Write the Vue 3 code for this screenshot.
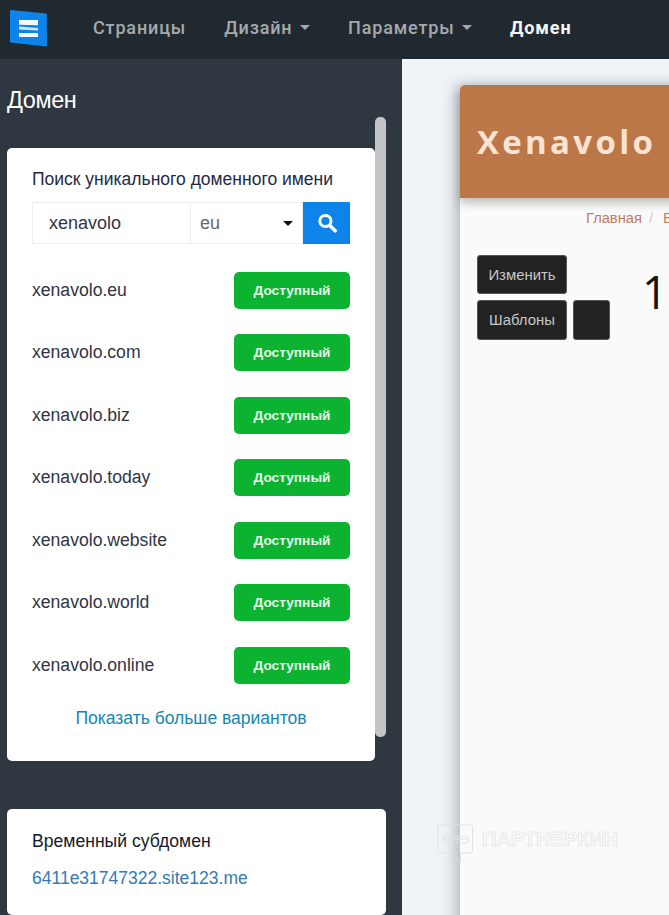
<script setup>
const domains = ['eu', 'com', 'biz', 'today', 'website', 'world', 'online']
</script>

<template>
  <div class="page">
    <header class="topbar">
      <svg class="logo" width="38" height="38" viewBox="0 0 38 38">
        <path d="M0.8 0 36 3.4Q36.8 3.5 36.8 4.3L37 35.6Q37 36.5 36 36.4L0.8 32.6Q0 32.5 0 31.7V0.8Q0 0 0.8 0Z" fill="#0d84ea" />
        <path d="M9 10H28V15.2L9 14.8Z" fill="#f3f9fe" />
        <path d="M9 16.6 28 18V20.4L9 19.6Z" fill="#cfe6fa" />
        <path d="M9 23H28V27H9Z" fill="#f3f9fe" />
      </svg>
      <nav class="nav">
        <a class="nav-link">Страницы</a>
        <a class="nav-link caret">Дизайн</a>
        <a class="nav-link caret">Параметры</a>
        <a class="nav-link active">Домен</a>
      </nav>
    </header>

    <div class="layout">
      <aside class="sidebar">
        <h2 class="side-title">Домен</h2>

        <section class="card search-card">
          <p class="search-label">Поиск уникального доменного имени</p>
          <div class="search">
            <div class="search-input">xenavolo</div>
            <div class="search-select">eu</div>
            <button class="search-btn">
              <svg width="22" height="22" viewBox="0 0 22 22">
                <circle cx="9.4" cy="9" r="5.6" fill="none" stroke="#fff" stroke-width="3" />
                <path d="M13.8 13.4 19.2 18.8" stroke="#fff" stroke-width="3.6" stroke-linecap="round" />
              </svg>
            </button>
          </div>
          <ul class="domains">
            <li v-for="d in domains" :key="d" class="domain">
              <span>xenavolo.{{ d }}</span>
              <button class="avail">Доступный</button>
            </li>
          </ul>
          <a class="more">Показать больше вариантов</a>
        </section>

        <section class="card sub-card">
          <p class="sub-title">Временный субдомен</p>
          <a class="sub-link">6411e31747322.site123.me</a>
        </section>

        <div class="scrollbar"></div>
      </aside>

      <main class="main">
        <div class="site">
          <div class="site-head">Xenavolo</div>
          <div class="crumbs">
            <span>Главная</span><i>/</i><span>Все</span>
          </div>
          <div class="site-body">
            <div class="tools">
              <button class="tool">Изменить</button>
              <div class="tool-row">
                <button class="tool">Шаблоны</button>
                <button class="tool square"></button>
              </div>
            </div>
            <div class="big">1</div>
          </div>
        </div>
      </main>
    </div>

    <div class="watermark">
      <svg width="37" height="40" viewBox="0 0 37 40" fill="none" stroke="#dfe2e5">
        <path d="M2.5 1H33.5Q35.5 1 35.5 3V27Q35.5 29 33.5 29H23.5V39L15 29H2.5Q1 29 1 27V3Q1 1 2.5 1Z" />
        <rect x="6" y="12" width="11" height="7" rx="2" />
        <rect x="20" y="12" width="11" height="7" rx="2" />
        <path d="M6 15H31" />
      </svg>
      <span>ПАРТНЕРКИН</span>
    </div>
  </div>
</template>

<style>
html, body {
  margin: 0;
  overflow: hidden;
}
</style>

<style scoped>
.page {
  position: relative;
  width: 669px;
  height: 915px;
  overflow: hidden;
  font-family: "Liberation Sans", Arial, sans-serif;
  background: #f0f4f7;
}
.topbar {
  height: 59px;
  background: #212930;
  display: flex;
  align-items: center;
  padding-left: 10px;
  box-sizing: border-box;
}
.logo {
  flex: none;
  margin-top: -1px;
}
.nav {
  display: flex;
  margin: -4px 0 0 45px;
  gap: 38px;
}
.nav-link {
  font-family: Roboto, sans-serif;
  font-weight: 500;
  font-size: 18px;
  letter-spacing: 0.85px;
  color: #a5a9ac;
  display: flex;
  align-items: center;
}
.nav-link.active {
  color: #f4f5f5;
  font-weight: 700;
}
.caret::after {
  content: "";
  margin-left: 7.5px;
  border-top: 5px solid #a5a9ac;
  border-left: 5px solid transparent;
  border-right: 5px solid transparent;
}
.layout {
  display: flex;
  height: 856px;
}
.sidebar {
  position: relative;
  flex: none;
  width: 402px;
  box-sizing: border-box;
  background: #2f3740;
  padding: 0 16px 0 7px;
  overflow: hidden;
}
.side-title {
  margin: 29px 0 0;
  height: 60px;
  font-size: 23.5px;
  font-weight: 400;
  letter-spacing: -0.4px;
  line-height: 25px;
  color: #fff;
}
.card {
  background: #fff;
  border-radius: 5px;
  box-sizing: border-box;
  padding: 0 25px;
}
.search-card {
  width: 368px;
  height: 613px;
  padding-top: 21px;
}
.search-label {
  margin: 0;
  font-size: 17.5px;
  line-height: 20px;
  color: #242a44;
}
.search {
  display: flex;
  height: 42px;
  width: 318px;
  margin-top: 13px;
}
.search-input,
.search-select {
  box-sizing: border-box;
  border: 1px solid #eceef0;
  font-size: 18px;
  line-height: 40px;
}
.search-input {
  width: 158px;
  padding-left: 16px;
  color: #2f3443;
  border-right: none;
}
.search-select {
  position: relative;
  width: 113px;
  padding-left: 9px;
  color: #666;
}
.search-select::after {
  content: "";
  position: absolute;
  right: 9px;
  top: 18px;
  border-top: 5px solid #111;
  border-left: 5px solid transparent;
  border-right: 5px solid transparent;
}
.search-btn {
  width: 47px;
  border: none;
  padding: 0;
  background: #0d84ea;
  display: flex;
  align-items: center;
  justify-content: center;
}
.domains {
  list-style: none;
  margin: 27.9px 0 0;
  padding: 0;
  display: flex;
  flex-direction: column;
  gap: 25.5px;
}
.domain {
  display: flex;
  align-items: center;
  justify-content: space-between;
  height: 37px;
  font-size: 17.6px;
  color: #2f3443;
}
.avail {
  width: 116px;
  height: 37px;
  border: none;
  border-radius: 5px;
  background: #0cb331;
  color: #e6f7ea;
  font-family: inherit;
  font-weight: 700;
  font-size: 13.7px;
  padding: 0;
}
.more {
  display: block;
  margin-top: 24px;
  text-align: center;
  font-size: 17.5px;
  line-height: 20px;
  color: #1487b4;
}
.sub-card {
  width: 379px;
  height: 106px;
  margin-top: 48px;
  padding-top: 22px;
}
.sub-title {
  margin: 0;
  font-size: 17.6px;
  line-height: 20px;
  color: #15192b;
}
.sub-link {
  display: block;
  margin-top: 17px;
  font-size: 17.5px;
  line-height: 20px;
  color: #337ab7;
}
.scrollbar {
  position: absolute;
  left: 375px;
  top: 58px;
  width: 11px;
  height: 620px;
  border-radius: 5px;
  background: #c2c6c9;
}
.main {
  flex: 1;
  min-width: 0;
  padding: 26px 0 0 58px;
}
.site {
  width: 400px;
  height: 900px;
  background: #fafafa;
  border-radius: 5px 0 0 0;
  box-shadow: -5px 0 14px rgba(60, 70, 80, 0.34);
}
.site-head {
  height: 113px;
  box-sizing: border-box;
  padding: 36px 0 0 17px;
  background: #bc7748;
  border-radius: 5px 0 0 0;
  box-shadow: 0 5px 10px rgba(60, 50, 40, 0.3);
  font-family: "Open Sans", sans-serif;
  font-weight: 700;
  font-size: 33px;
  line-height: 42px;
  letter-spacing: 3.3px;
  color: #fae3d3;
}
.crumbs {
  display: flex;
  margin: 12px 0 0 126px;
  font-size: 14.7px;
  line-height: 16px;
  color: #bc7d5a;
}
.crumbs i {
  font-style: normal;
  color: #ccc;
  margin: 0 10px 0 7px;
}
.site-body {
  display: flex;
  padding: 29px 0 0 17px;
}
.tools {
  display: flex;
  flex-direction: column;
  gap: 6px;
}
.tool-row {
  display: flex;
  gap: 6px;
}
.tool {
  width: 90px;
  height: 39px;
  box-sizing: border-box;
  border: 1px solid #555;
  border-radius: 3px;
  background: #222;
  color: #c8c8c8;
  font-family: inherit;
  font-size: 14.9px;
  padding: 0;
}
.tool-row .tool {
  height: 40px;
}
.tool.square {
  width: 37px;
}
.big {
  margin: 7px 0 0 32px;
  font-family: "Open Sans", sans-serif;
  font-weight: 400;
  font-size: 45px;
  line-height: 60px;
  color: #111;
}
.watermark {
  position: absolute;
  left: 437px;
  top: 824px;
  display: flex;
  gap: 8px;
  align-items: flex-start;
}
.watermark span {
  margin-top: 5px;
  font-family: "Liberation Sans", sans-serif;
  font-weight: 700;
  font-size: 20px;
  line-height: 20px;
  color: transparent;
  -webkit-text-stroke: 0.6px #dcdfe2;
}
</style>
